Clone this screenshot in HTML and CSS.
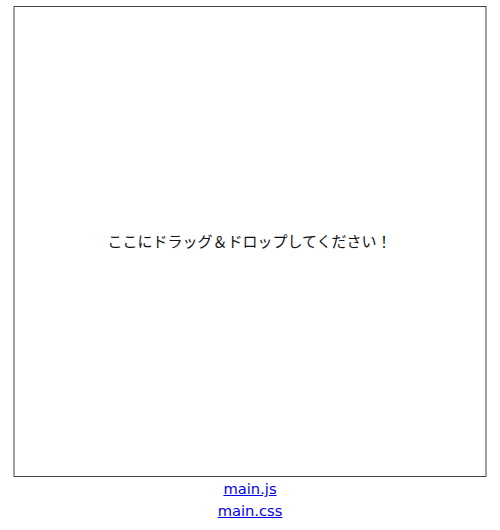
FILE: index.html
```html
<!DOCTYPE html>
<html lang="ja">
<head>
<meta charset="utf-8">
<link rel="stylesheet" href="styles.css">
</head>
<body>
<div class="drop">ここにドラッグ＆ドロップしてください！</div>
<div class="links">
<a href="#">main.js</a>
<a href="#">main.css</a>
</div>
</body>
</html>
```
FILE: styles.css
```css
html, body {
  margin: 0;
  background: #fff;
}
body {
  font-family: "Noto Sans CJK JP", "Noto Sans", sans-serif;
  font-size: 14px;
  color: #000;
  padding-top: 6px;
}
.drop {
  box-sizing: border-box;
  width: 473px;
  height: 471px;
  padding-bottom: 2px;
  margin: 0 auto;
  border: 1px solid #444;
  display: flex;
  align-items: center;
  justify-content: center;
  font-size: 15px;
  color: #111;
  transform: translateX(-0.5px);
}
.links {
  display: flex;
  flex-direction: column;
  align-items: center;
  padding-top: 1px;
  font-family: "DejaVu Sans", sans-serif;
  font-size: 14.7px;
  line-height: 22px;
}
.links a {
  color: #0000ee;
}
```
